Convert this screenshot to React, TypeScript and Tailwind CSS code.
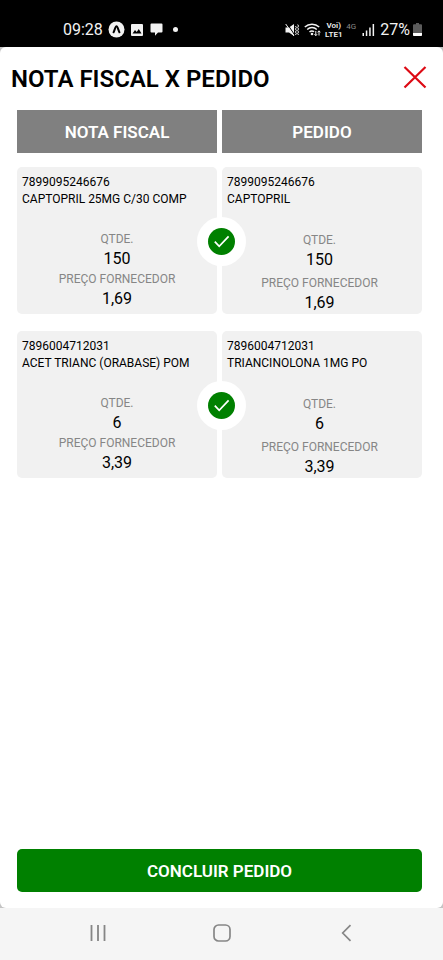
interface ProductEntry {
  code: string;
  name: string;
  quantity: string;
  price: string;
}

interface Match {
  invoice: ProductEntry;
  order: ProductEntry;
}

const matches: Match[] = [
  {
    invoice: {
      code: "7899095246676",
      name: "CAPTOPRIL 25MG C/30 COMP",
      quantity: "150",
      price: "1,69",
    },
    order: { code: "7899095246676", name: "CAPTOPRIL", quantity: "150", price: "1,69" },
  },
  {
    invoice: {
      code: "7896004712031",
      name: "ACET TRIANC (ORABASE) POM",
      quantity: "6",
      price: "3,39",
    },
    order: {
      code: "7896004712031",
      name: "TRIANCINOLONA 1MG PO",
      quantity: "6",
      price: "3,39",
    },
  },
];

export default function App() {
  return (
    <div className="flex min-h-dvh flex-col bg-black font-['Roboto',sans-serif] text-black">
      <StatusBar />
      <div className="flex flex-1 flex-col bg-[#c4c4c4]">
        <main className="flex flex-1 flex-col rounded-md bg-white pb-4">
          <header className="flex items-center justify-between pt-3 pr-4 pl-[11px]">
            <h1 className="pt-0.5 text-2xl leading-9 font-semibold">NOTA FISCAL X PEDIDO</h1>
            <button type="button" aria-label="Fechar" className="text-[#dd0a14]">
              <svg width="24" height="24" viewBox="0 0 24 24" fill="none" stroke="currentColor" strokeWidth="2.2">
                <path d="M1.5 1 22.5 21.500M22.5 1 1.5 21.500" />
              </svg>
            </button>
          </header>

          <section className="flex flex-1 flex-col pt-[13px] pr-[21px] pl-[17px]">
            <div className="grid grid-cols-2 gap-[5px]">
              <ColumnTitle label="NOTA FISCAL" />
              <ColumnTitle label="PEDIDO" />
            </div>
            <ul className="mt-3.5 flex flex-col gap-[17px]">
              {matches.map((match) => (
                <MatchRow key={match.invoice.code} match={match} />
              ))}
            </ul>
            <button
              type="button"
              className="mt-auto h-[43px] rounded-[5px] bg-[#008000] pt-0.5 text-[17px] font-semibold text-white"
            >
              CONCLUIR PEDIDO
            </button>
          </section>
        </main>
      </div>
      <NavigationBar />
    </div>
  );
}

function ColumnTitle({ label }: { label: string }) {
  return (
    <h2 className="flex h-[43px] items-center justify-center bg-[#808080] pt-0.5 text-[17px] font-semibold text-white">
      {label}
    </h2>
  );
}

function MatchRow({ match }: { match: Match }) {
  return (
    <li className="grid grid-cols-2 gap-[5px]">
      <article className="rounded-[5px] bg-[#f1f1f1] px-[5px] pt-[7px] pb-[5px]">
        <ProductHeading entry={match.invoice} />
        <dl className="mt-[21px] text-center">
          <Field label="QTDE." value={match.invoice.quantity} />
          <Field label="PREÇO FORNECEDOR" value={match.invoice.price} />
        </dl>
      </article>
      <article className="relative rounded-[5px] bg-[#f1f1f1] pt-[7px] pr-2.5 pb-px pl-[5px]">
        <ProductHeading entry={match.order} />
        <dl className="mt-[22px] flex flex-col gap-[3px] text-center">
          <Field label="QTDE." value={match.order.quantity} />
          <Field label="PREÇO FORNECEDOR" value={match.order.price} />
        </dl>
        {/* Badge that joins the two cards */}
        <span className="absolute top-[50px] -left-[25px] flex size-[49px] items-center justify-center rounded-full bg-white">
          <svg width="27" height="27" viewBox="0 0 27 27" role="img" aria-label="Conferido">
            <circle cx="13.5" cy="13.5" r="13.5" fill="#008000" />
            <path
              d="M6.8 13.6 11.2 18.3 20.6 8.4"
              fill="none"
              stroke="#fff"
              strokeWidth="1.7"
            />
          </svg>
        </span>
      </article>
    </li>
  );
}

function ProductHeading({ entry }: { entry: ProductEntry }) {
  return (
    <div className="text-xs leading-[17px] whitespace-nowrap">
      <p>{entry.code}</p>
      <h3>{entry.name}</h3>
    </div>
  );
}

function Field({ label, value }: { label: string; value: string }) {
  return (
    <div>
      <dt className="text-xs leading-5 text-[#868686]">{label}</dt>
      <dd className="text-base leading-5">{value}</dd>
    </div>
  );
}

function StatusBar() {
  return (
    <div className="flex h-[47px] items-center justify-between bg-black pt-3 pr-[21px] pl-[63px] text-[#f2f2f2]">
      <div className="flex items-center">
        <span className="text-base">09:28</span>
        <svg className="ml-[5px]" width="17" height="17" viewBox="0 0 17 17">
          <circle cx="8.5" cy="8.5" r="8" fill="currentColor" />
          <path d="M5.2 12C6.5 10.3 7.2 5.3 8.5 5.3S10.500 10.300 11.8 12" fill="none" stroke="#000" strokeWidth="2" />
        </svg>
        <svg className="ml-1.5" width="12" height="12" viewBox="0 0 12 12">
          <rect width="12" height="12" rx="1" fill="currentColor" />
          <path d="M1.500 9.500 4 6l1.700 2 2.100-3L10.500 9.500Z" fill="#000" />
        </svg>
        <svg className="ml-[7px]" width="13" height="13" viewBox="0 0 13 13" fill="currentColor">
          <path d="M1.500 0.500h10a1 1 0 0 1 1 1v7a1 1 0 0 1-1 1H8L5 12.700V9.500H1.500a1 1 0 0 1-1-1v-7a1 1 0 0 1 1-1Z" />
        </svg>
        <span className="ml-2.5 size-[5px] rounded-full bg-[#f2f2f2]" />
      </div>

      <div className="flex items-center">
        <svg width="14" height="14" viewBox="0 0 14 14" fill="none" stroke="currentColor">
          <path d="M0.500 4.500h3.500L9 1v12L4 9.500H0.500Z" fill="currentColor" stroke="none" />
          <path d="M2 0.500 10 12.500" stroke="#000" strokeWidth="1" />
          <path d="M0.700 1 9 13" strokeWidth="1" />
          <path d="M10.500 3l.8 1.500-.8 1.500.8 1.500-.8 1.500.8 1.500-.8 1.500M12.700 1.500l.8 1.500-.8 1.500.8 1.500-.8 1.500.8 1.500-.8 1.500.8 1.500" />
        </svg>
        <svg className="ml-[5px]" width="17" height="15" viewBox="0 0 17 15" fill="none" stroke="currentColor" strokeWidth="1.500">
          <path d="M0.800 5A10.500 10.500 0 0 1 15.200 5M3.200 7.500a7 7 0 0 1 9.600 0M5.500 10a3.800 3.800 0 0 1 4.600-.3" />
          <circle cx="8" cy="12" r="1.300" fill="currentColor" stroke="none" />
          <path d="M11.800 9v4.500M10.500 12.200l1.300 1.500 1.300-1.500M15 13.500V9M13.700 10.300 15 8.800l1.300 1.500" strokeWidth="1" />
        </svg>
        <span className="ml-1 flex w-[17px] flex-col items-center text-[8px] leading-[9px] font-semibold">
          <span>Voi)</span>
          <span>LTE1</span>
        </span>
        <span className="mb-1.5 ml-1 w-3 text-[8px] leading-3 text-[#8a8a8a]">4G</span>
        <svg className="ml-1" width="13" height="12" viewBox="0 0 13 12" fill="currentColor">
          <path d="M0.500 9h1.500v3H.5ZM3.800 6.500h1.500V12H3.800ZM7.200 3.500h1.500V12H7.200ZM10.600 0h1.500v12h-1.500Z" />
        </svg>
        <span className="ml-[5px] text-base">27%</span>
        <svg className="ml-[3px]" width="9" height="13" viewBox="0 0 9 13">
          <path d="M3 0h3v1.200h2a1 1 0 0 1 1 1V12a1 1 0 0 1-1 1H1a1 1 0 0 1-1-1V2.200a1 1 0 0 1 1-1h2Z" fill="#5c5c5c" />
          <path d="M0 10h9v2a1 1 0 0 1-1 1H1a1 1 0 0 1-1-1Z" fill="#fff" />
        </svg>
      </div>
    </div>
  );
}

function NavigationBar() {
  return (
    <nav className="flex h-[52px] items-center justify-between bg-[#f5f5f5] px-[87px] pb-0.5 text-[#868686]">
      <button type="button" aria-label="Recentes">
        <svg width="22" height="18" viewBox="0 0 22 18" fill="none" stroke="currentColor" strokeWidth="1.800">
          <path d="M4.500 1v16M11 1v16M17.500 1v16" />
        </svg>
      </button>
      <button type="button" aria-label="Início">
        <svg width="18" height="18" viewBox="0 0 18 18" fill="none" stroke="currentColor" strokeWidth="1.700">
          <rect x="1" y="1" width="16" height="16" rx="4.500" />
        </svg>
      </button>
      <button type="button" aria-label="Voltar">
        <svg width="22" height="18" viewBox="0 0 22 18" fill="none" stroke="currentColor" strokeWidth="1.700">
          <path d="M16.500 1.200 8.700 9l7.800 7.800" />
        </svg>
      </button>
    </nav>
  );
}
